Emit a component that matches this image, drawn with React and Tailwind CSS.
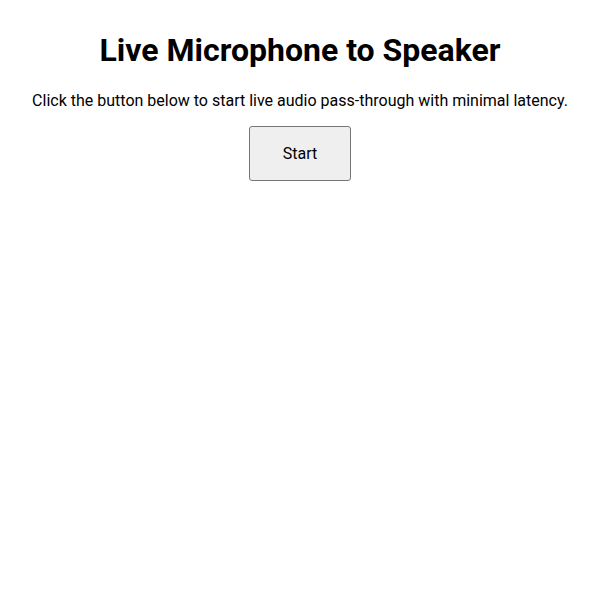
export default function App() {
  return (
    <div className="min-h-[600px] bg-white pt-[32px] text-center text-black font-['Roboto',sans-serif]">
      <h1 className="text-[32px] font-bold leading-[1.172]">Live Microphone to Speaker</h1>
      <p className="mt-[22px] text-base leading-[1.172]">
        Click the button below to start live audio pass-through with minimal latency.
      </p>
      <button className="mt-[16px] h-[55px] w-[102px] rounded-[3px] border border-[#767676] bg-[#efefef] text-base">
        Start
      </button>
    </div>
  );
}
